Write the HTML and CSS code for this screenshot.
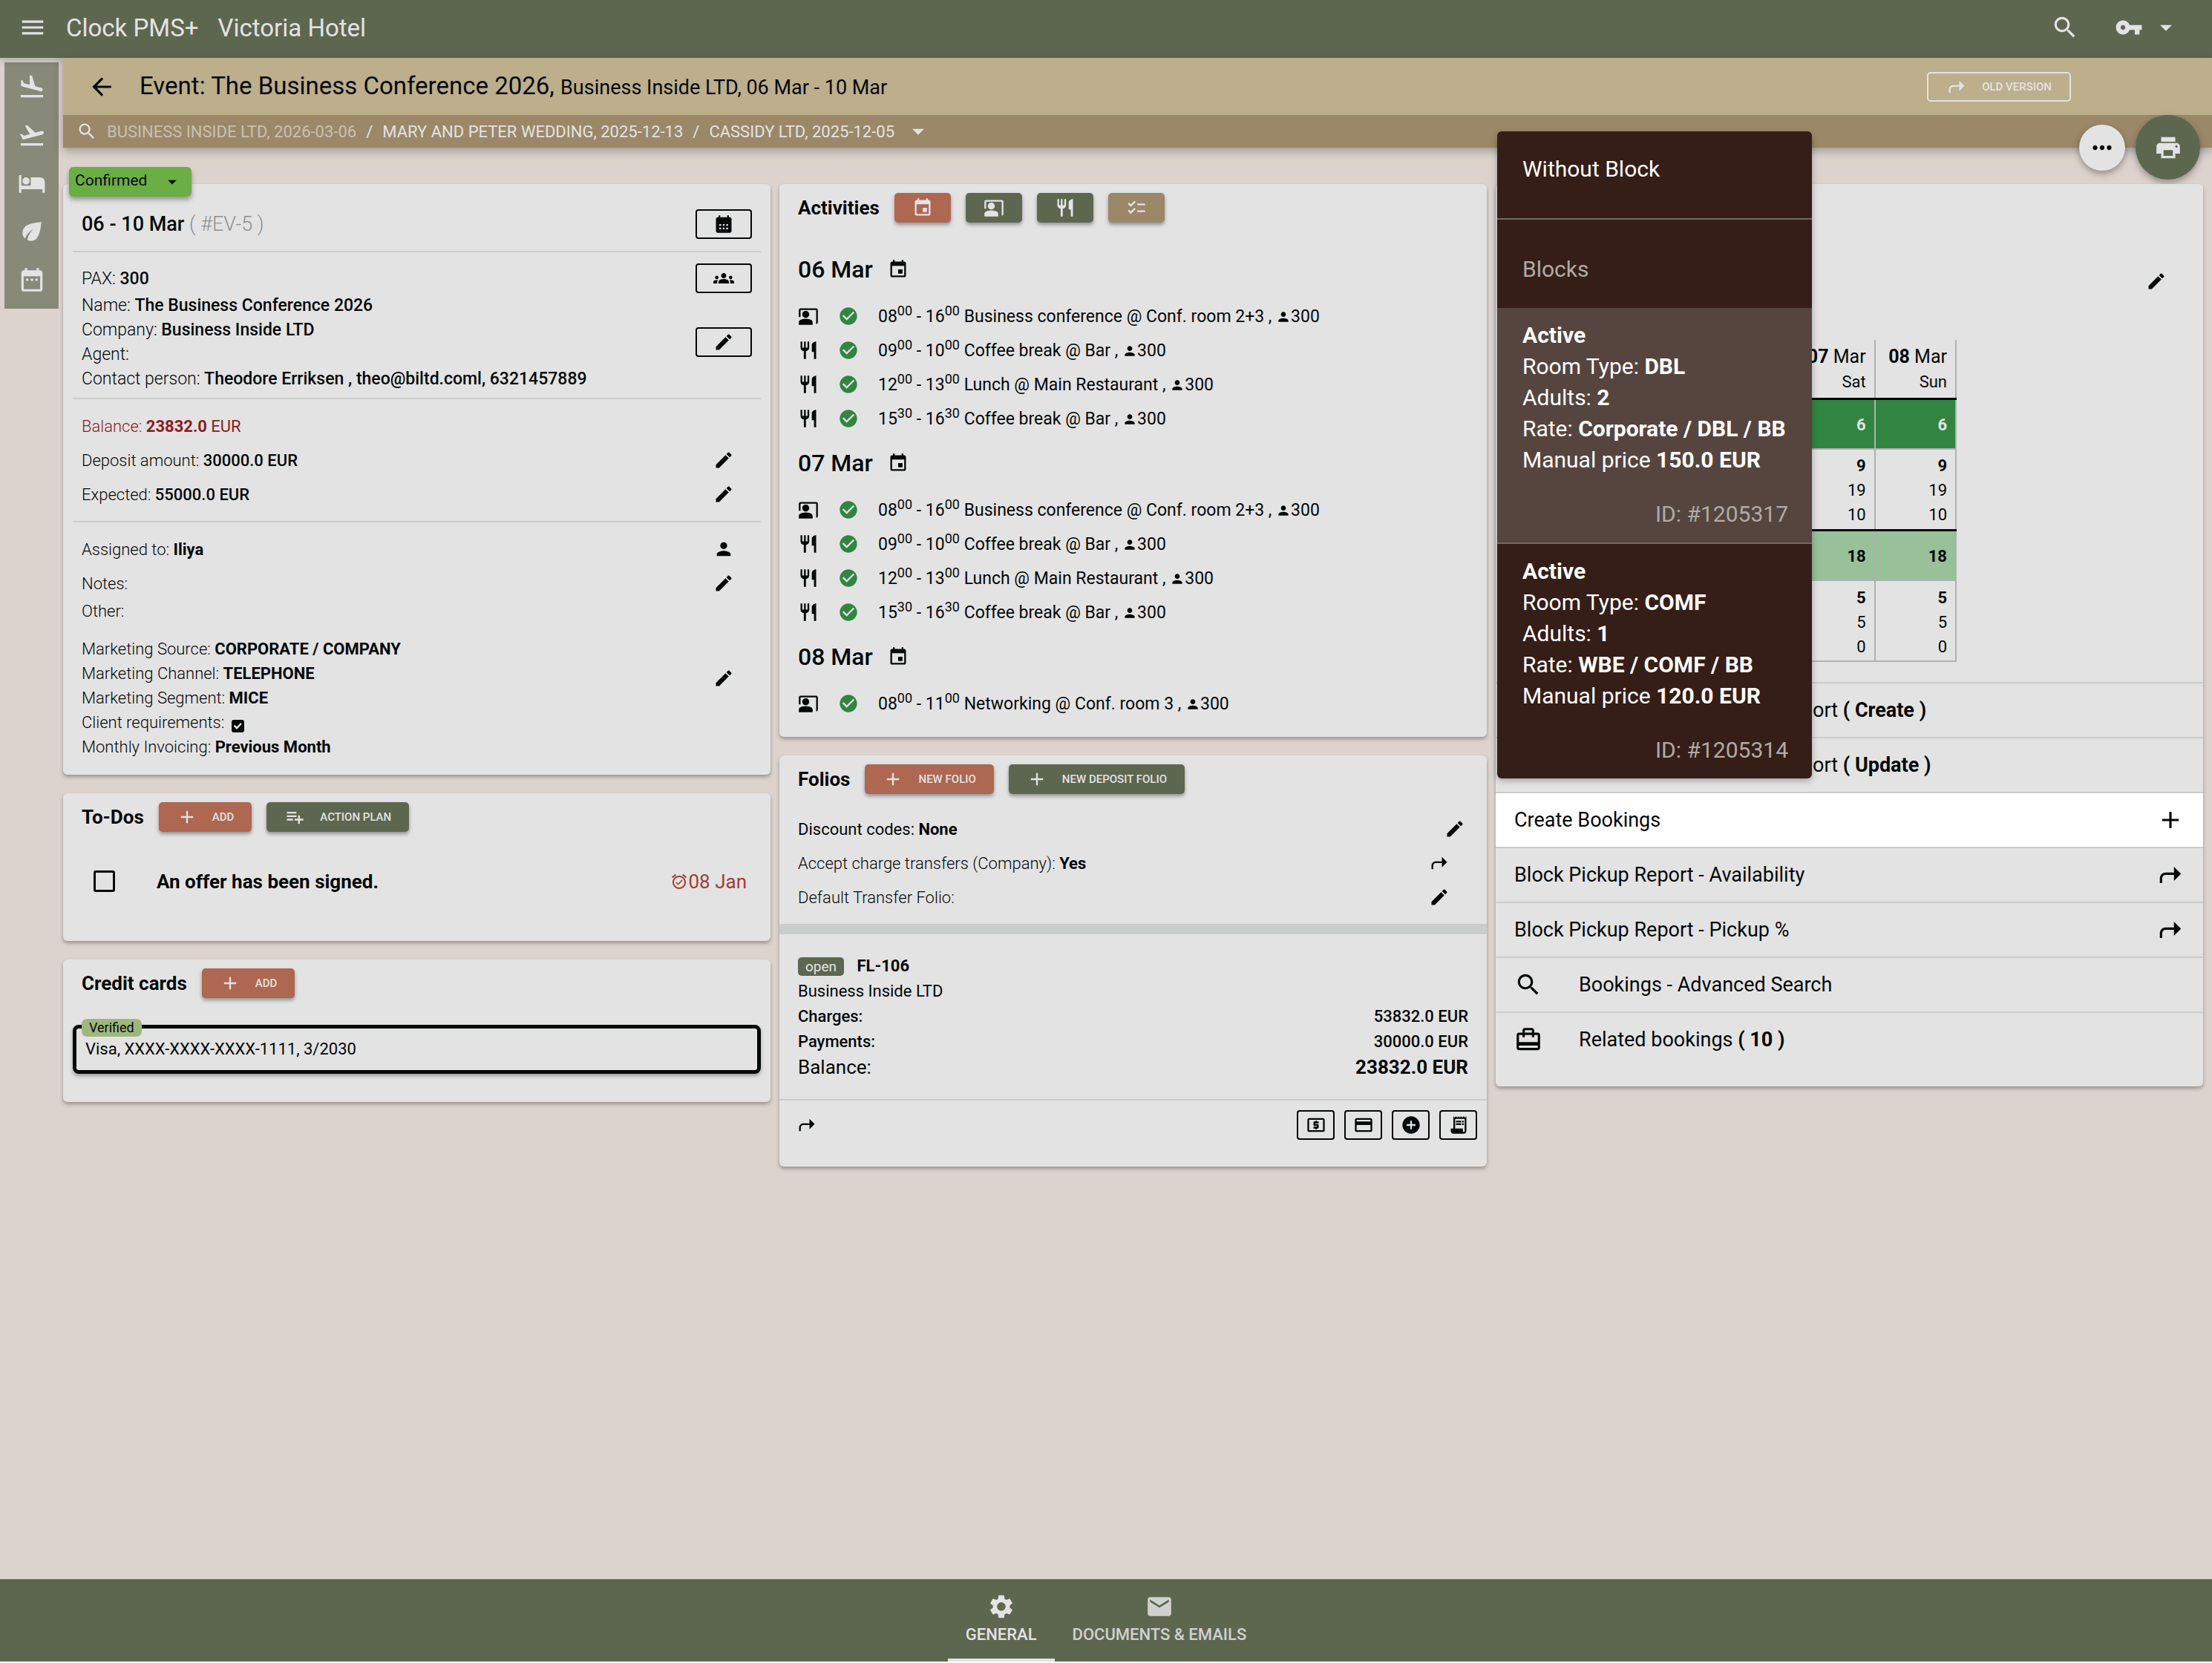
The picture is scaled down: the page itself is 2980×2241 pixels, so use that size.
FILE: index.html
```html
<!DOCTYPE html>
<html lang="en">
<head>
    <meta charset="UTF-8">
    <meta name="viewport" content="width=device-width, initial-scale=1.0">
    <title>Clock PMS+ - Victoria Hotel</title>
    <link rel="stylesheet" href="styles.css">
</head>
<body>
    <!-- Icon sprite -->
    <svg class="sprite" aria-hidden="true">
        <symbol id="menu" viewBox="0 0 24 24"><path d="M3 18h18v-2H3v2zm0-5h18v-2H3v2zm0-7v2h18V6H3z"/></symbol>
        <symbol id="search" viewBox="0 0 24 24"><path d="M15.5 14h-.79l-.28-.27C15.41 12.59 16 11.11 16 9.5 16 5.91 13.09 3 9.5 3S3 5.91 3 9.5 5.91 16 9.5 16c1.61 0 3.09-.59 4.23-1.57l.27.28v.79l5 4.99L20.49 19l-4.99-5zm-6 0C7.01 14 5 11.99 5 9.5S7.01 5 9.5 5 14 7.01 14 9.5 11.99 14 9.5 14z"/></symbol>
        <symbol id="key" viewBox="0 0 24 24"><path d="M12.65 10C11.83 7.67 9.61 6 7 6c-3.31 0-6 2.69-6 6s2.69 6 6 6c2.61 0 4.83-1.67 5.65-4H17v4h4v-4h2v-4H12.65zM7 14c-1.1 0-2-.9-2-2s.9-2 2-2 2 .9 2 2-.9 2-2 2z"/></symbol>
        <symbol id="drop" viewBox="0 0 24 24"><path d="M7 10l5 5 5-5z"/></symbol>
        <symbol id="back" viewBox="0 0 24 24"><path d="M20 11H7.83l5.59-5.59L12 4l-8 8 8 8 1.41-1.41L7.83 13H20v-2z"/></symbol>
        <symbol id="land" viewBox="0 0 24 24"><path d="M2.5 19h19v2h-19zm7.18-5.73l4.35 1.16 5.31 1.42c.8.21 1.62-.26 1.84-1.06.21-.8-.26-1.62-1.06-1.84l-5.31-1.42-2.76-9.02L10.12 2v8.28L5.15 8.95l-.93-2.32-1.45-.39v5.17l1.6.43 5.31 1.43z"/></symbol>
        <symbol id="takeoff" viewBox="0 0 24 24"><path d="M2.5 19h19v2h-19zm19.57-9.36c-.21-.8-1.04-1.28-1.84-1.06L14.92 10l-6.9-6.43-1.93.51 4.14 7.17-4.97 1.33-1.97-1.54-1.45.39 1.82 3.16.77 1.33 1.6-.43 5.31-1.42 4.35-1.16L21 11.49c.81-.23 1.28-1.05 1.07-1.85z"/></symbol>
        <symbol id="hotel" viewBox="0 0 24 24"><path d="M7 13c1.66 0 3-1.34 3-3S8.66 7 7 7s-3 1.34-3 3 1.34 3 3 3zm12-6h-8v7H3V5H1v15h2v-3h18v3h2v-9c0-2.21-1.79-4-4-4z"/></symbol>
        <symbol id="eco" viewBox="0 0 24 24"><path d="M6.05 8.05c-2.73 2.73-2.73 7.15-.02 9.88 1.47-3.4 4.09-6.24 7.36-7.93-2.77 2.34-4.71 5.61-5.39 9.32 2.6 1.23 5.8.78 7.95-1.37C19.43 14.47 20 4 20 4S9.53 4.57 6.05 8.05z"/></symbol>
        <symbol id="range" viewBox="0 0 24 24"><path d="M9 11H7v2h2v-2zm4 0h-2v2h2v-2zm4 0h-2v2h2v-2zm2-7h-1V2h-2v2H8V2H6v2H5c-1.11 0-1.99.9-1.99 2L3 20c0 1.1.89 2 2 2h14c1.1 0 2-.9 2-2V6c0-1.1-.9-2-2-2zm0 16H5V9h14v11z"/></symbol>
        <symbol id="month" viewBox="0 0 24 24"><path d="M19 4h-1V2h-2v2H8V2H6v2H5c-1.11 0-1.99.9-1.99 2L3 20a2 2 0 0 0 2 2h14c1.1 0 2-.9 2-2V6c0-1.1-.9-2-2-2zM9 18H7v-2h2v2zm0-4H7v-2h2v2zm4 4h-2v-2h2v2zm0-4h-2v-2h2v2zm4 4h-2v-2h2v2zm0-4h-2v-2h2v2z"/></symbol>
        <symbol id="groups" viewBox="0 0 24 24"><path d="M12 12.75c1.63 0 3.07.39 4.24.9 1.08.48 1.76 1.56 1.76 2.73V18H6v-1.61c0-1.18.68-2.26 1.76-2.73 1.17-.52 2.61-.91 4.24-.91zM4 13c1.1 0 2-.9 2-2s-.9-2-2-2-2 .9-2 2 .9 2 2 2zm1.13 1.1c-.37-.06-.74-.1-1.13-.1-.99 0-1.93.21-2.78.58C.48 14.9 0 15.62 0 16.43V18h4.5v-1.61c0-.83.23-1.61.63-2.29zM20 13c1.1 0 2-.9 2-2s-.9-2-2-2-2 .9-2 2 .9 2 2 2zm4 3.43c0-.81-.48-1.53-1.22-1.85-.85-.37-1.79-.58-2.78-.58-.39 0-.76.04-1.13.1.4.68.63 1.46.63 2.29V18H24v-1.57zM12 6c1.66 0 3 1.34 3 3s-1.34 3-3 3-3-1.34-3-3 1.34-3 3-3z"/></symbol>
        <symbol id="edit" viewBox="0 0 24 24"><path d="M3 17.25V21h3.75L17.81 9.94l-3.75-3.75L3 17.25zM20.71 7.04c.39-.39.39-1.02 0-1.41l-2.34-2.34c-.39-.39-1.02-.39-1.41 0l-1.83 1.83 3.75 3.75 1.83-1.83z"/></symbol>
        <symbol id="person" viewBox="0 0 24 24"><path d="M12 12c2.21 0 4-1.79 4-4s-1.79-4-4-4-4 1.79-4 4 1.79 4 4 4zm0 2c-2.67 0-8 1.34-8 4v2h16v-2c0-2.66-5.33-4-8-4z"/></symbol>
        <symbol id="event" viewBox="0 0 24 24"><path d="M17 12h-5v5h5v-5zM16 1v2H8V1H6v2H5c-1.11 0-1.99.9-1.99 2L3 19c0 1.1.89 2 2 2h14c1.1 0 2-.9 2-2V5c0-1.1-.9-2-2-2h-1V1h-2zm3 18H5V8h14v11z"/></symbol>
        <symbol id="present" viewBox="0 0 24 24"><path d="M21 3H3c-1.1 0-2 .9-2 2v8h2V5h18v16c1.1 0 2-.9 2-2V5c0-1.1-.9-2-2-2zM13 10c0-2.21-1.79-4-4-4s-4 1.79-4 4 1.79 4 4 4 4-1.79 4-4zM15.39 16.56C13.71 15.7 11.53 15 9 15s-4.71.7-6.39 1.56C1.61 17.07 1 18.1 1 19.22V22h16v-2.78c0-1.12-.61-2.15-1.61-2.66z"/></symbol>
        <symbol id="food" viewBox="0 0 24 24"><path d="M11 9H9V2H7v7H5V2H3v7c0 2.12 1.66 3.84 3.75 3.97V22h2.5v-9.03C11.34 12.84 13 11.12 13 9V2h-2v7zm5-3v8h2.5v8H21V2c-2.76 0-5 2.24-5 4z"/></symbol>
        <symbol id="checklist" viewBox="0 0 24 24"><path d="M22 7h-9v2h9V7zm0 8h-9v2h9v-2zM5.54 11L2 7.46l1.41-1.41 2.12 2.12 4.24-4.24 1.41 1.41L5.54 11zm0 8L2 15.46l1.41-1.41 2.12 2.12 4.24-4.24 1.41 1.41L5.54 19z"/></symbol>
        <symbol id="check" viewBox="0 0 24 24"><path d="M12 2C6.48 2 2 6.48 2 12s4.48 10 10 10 10-4.48 10-10S17.52 2 12 2zm-2 15l-5-5 1.41-1.41L10 14.17l7.59-7.59L19 8l-9 9z"/></symbol>
        <symbol id="shortcut" viewBox="0 0 24 24"><path d="M21 11l-6-6v5H8c-2.76 0-5 2.24-5 5v4h2v-4c0-1.65 1.35-3 3-3h7v5l6-6z"/></symbol>
        <symbol id="add" viewBox="0 0 24 24"><path d="M19 13h-6v6h-2v-6H5v-2h6V5h2v6h6v2z"/></symbol>
        <symbol id="playlist" viewBox="0 0 24 24"><path d="M14 10H3v2h11v-2zm0-4H3v2h11V6zm4 8v-4h-2v4h-4v2h4v4h2v-4h4v-2h-4zM3 16h7v-2H3v2z"/></symbol>
        <symbol id="alarm" viewBox="0 0 24 24"><path d="M22 5.72l-4.6-3.86-1.29 1.53 4.6 3.86L22 5.72zM7.88 3.39L6.6 1.86 2 5.71l1.29 1.53 4.59-3.85zM12 4c-4.97 0-9 4.03-9 9s4.02 9 9 9c4.97 0 9-4.03 9-9s-4.03-9-9-9zm0 16c-3.87 0-7-3.13-7-7s3.13-7 7-7 7 3.13 7 7-3.13 7-7 7zm-1.46-5.47L8.41 12.4l-1.06 1.06 3.18 3.18 6-6-1.06-1.06-4.93 4.95z"/></symbol>
        <symbol id="more" viewBox="0 0 24 24"><path d="M6 10c-1.1 0-2 .9-2 2s.9 2 2 2 2-.9 2-2-.9-2-2-2zm12 0c-1.1 0-2 .9-2 2s.9 2 2 2 2-.9 2-2-.9-2-2-2zm-6 0c-1.1 0-2 .9-2 2s.9 2 2 2 2-.9 2-2-.9-2-2-2z"/></symbol>
        <symbol id="print" viewBox="0 0 24 24"><path d="M19 8H5c-1.66 0-3 1.34-3 3v6h4v4h12v-4h4v-6c0-1.66-1.34-3-3-3zm-3 11H8v-5h8v5zm3-7c-.55 0-1-.45-1-1s.45-1 1-1 1 .45 1 1-.45 1-1 1zm-1-9H6v4h12V3z"/></symbol>
        <symbol id="cash" viewBox="0 0 24 24"><path d="M11 17h2v-1h1c.55 0 1-.45 1-1v-3c0-.55-.45-1-1-1h-3v-1h4V8h-2V7h-2v1h-1c-.55 0-1 .45-1 1v3c0 .55.45 1 1 1h3v1H9v2h2v1zm9-13H4c-1.11 0-1.99.89-1.99 2L2 18c0 1.11.89 2 2 2h16c1.11 0 2-.89 2-2V6c0-1.11-.89-2-2-2zm0 14H4V6h16v12z"/></symbol>
        <symbol id="card" viewBox="0 0 24 24"><path d="M20 4H4c-1.11 0-1.99.89-1.99 2L2 18c0 1.11.89 2 2 2h16c1.11 0 2-.89 2-2V6c0-1.11-.89-2-2-2zm0 14H4v-6h16v6zm0-10H4V6h16v2z"/></symbol>
        <symbol id="add-circle" viewBox="0 0 24 24"><path d="M12 2C6.48 2 2 6.48 2 12s4.48 10 10 10 10-4.48 10-10S17.52 2 12 2zm5 11h-4v4h-2v-4H7v-2h4V7h2v4h4v2z"/></symbol>
        <symbol id="receipt" viewBox="0 0 24 24"><path d="M19.5 3.5L18 2l-1.5 1.5L15 2l-1.5 1.5L12 2l-1.5 1.5L9 2 7.5 3.5 6 2v14H3v3c0 1.66 1.34 3 3 3h12c1.66 0 3-1.34 3-3V2l-1.5 1.5zM19 19c0 .55-.45 1-1 1s-1-.45-1-1v-3H8V5h11v14z"/><path d="M9 7h6v2H9zM16 7h2v2h-2zM9 10h6v2H9zM16 10h2v2h-2z"/></symbol>
        <symbol id="settings" viewBox="0 0 24 24"><path d="M19.14 12.94c.04-.3.06-.61.06-.94 0-.32-.02-.64-.07-.94l2.03-1.58c.18-.14.23-.41.12-.61l-1.92-3.32c-.12-.22-.37-.29-.59-.22l-2.39.96c-.5-.38-1.03-.7-1.62-.94l-.36-2.54c-.04-.24-.24-.41-.48-.41h-3.84c-.24 0-.43.17-.47.41l-.36 2.54c-.59.24-1.13.57-1.62.94l-2.39-.96c-.22-.08-.47 0-.59.22L2.74 8.87c-.12.21-.08.47.12.61l2.03 1.58c-.05.3-.09.63-.09.94s.02.64.07.94l-2.03 1.58c-.18.14-.23.41-.12.61l1.92 3.32c.12.22.37.29.59.22l2.39-.96c.5.38 1.03.7 1.62.94l.36 2.54c.05.24.24.41.48.41h3.84c.24 0 .44-.17.47-.41l.36-2.54c.59-.24 1.13-.56 1.62-.94l2.39.96c.22.08.47 0 .59-.22l1.92-3.32c.12-.22.07-.47-.12-.61l-2.01-1.58zM12 15.6c-1.98 0-3.6-1.62-3.6-3.6s1.62-3.6 3.6-3.6 3.6 1.62 3.6 3.6-1.62 3.6-3.6 3.6z"/></symbol>
        <symbol id="mail" viewBox="0 0 24 24"><path d="M20 4H4c-1.1 0-1.99.9-1.99 2L2 18c0 1.1.9 2 2 2h16c1.1 0 2-.9 2-2V6c0-1.1-.9-2-2-2zm0 4l-8 5-8-5V6l8 5 8-5v2z"/></symbol>
        <symbol id="travel" viewBox="0 0 24 24"><path d="M20 6h-3V4c0-1.11-.89-2-2-2H9c-1.11 0-2 .89-2 2v2H4c-1.11 0-2 .89-2 2v11c0 1.11.89 2 2 2h16c1.11 0 2-.89 2-2V8c0-1.11-.89-2-2-2zM9 4h6v2H9V4zm11 15H4v-2h16v2zm0-5H4V8h3v2h2V8h6v2h2V8h3v6z"/></symbol>
    </svg>

    <!-- Top bar -->
    <header class="topbar">
        <button class="plain" aria-label="Menu"><svg class="icon-lg"><use href="#menu"/></svg></button>
        <span class="app-name">Clock PMS+</span>
        <span class="hotel-name">Victoria Hotel</span>
        <div class="topbar-tools">
            <button class="plain" aria-label="Search"><svg class="icon-lg"><use href="#search"/></svg></button>
            <button class="plain account" aria-label="Account"><svg class="icon-lg"><use href="#key"/></svg><svg class="icon-lg"><use href="#drop"/></svg></button>
        </div>
    </header>

    <div class="layout">
        <nav class="sidebar" aria-label="Shortcuts">
            <a href="#arrivals" aria-label="Arrivals"><svg class="icon-lg"><use href="#land"/></svg></a>
            <a href="#departures" aria-label="Departures"><svg class="icon-lg"><use href="#takeoff"/></svg></a>
            <a href="#in-house" aria-label="In house"><svg class="icon-lg"><use href="#hotel"/></svg></a>
            <a href="#housekeeping" aria-label="Housekeeping"><svg class="icon-lg"><use href="#eco"/></svg></a>
            <a href="#calendar" aria-label="Calendar"><svg class="icon-lg"><use href="#range"/></svg></a>
        </nav>

        <div class="page">
            <div class="page-head">
                <div class="title-bar">
                    <a href="#events" class="back" aria-label="Back"><svg class="icon-lg"><use href="#back"/></svg></a>
                    <h1>Event: The Business Conference 2026, <small>Business Inside LTD, 06 Mar - 10 Mar</small></h1>
                    <button class="btn btn-outline"><svg class="icon"><use href="#shortcut"/></svg>OLD VERSION</button>
                </div>
                <nav class="history" aria-label="Recent events">
                    <svg class="icon"><use href="#search"/></svg>
                    <a href="#ev5" class="current">BUSINESS INSIDE LTD, 2026-03-06</a>
                    <span>/</span>
                    <a href="#ev4">MARY AND PETER WEDDING, 2025-12-13</a>
                    <span>/</span>
                    <a href="#ev3">CASSIDY LTD, 2025-12-05</a>
                    <button class="plain" aria-label="More events"><svg class="icon-lg"><use href="#drop"/></svg></button>
                </nav>
                <div class="fabs">
                    <button class="fab fab-more" aria-label="More"><svg class="icon-lg"><use href="#more"/></svg></button>
                    <button class="fab fab-print" aria-label="Print"><svg class="icon-lg"><use href="#print"/></svg></button>
                </div>
            </div>

            <main class="columns">
                <!-- Left column -->
                <div class="column">
                    <section class="card event">
                        <div class="status">
                            <select aria-label="Status"><option>Confirmed</option></select>
                            <svg class="icon"><use href="#drop"/></svg>
                        </div>
                        <div class="part dates">
                            <div class="row"><p class="period"><b>06 - 10 Mar</b> <span>( #EV-5 )</span></p>
                                <button class="box-btn" aria-label="Change dates"><svg class="icon"><use href="#month"/></svg></button></div>
                        </div>
                        <div class="part people">
                            <div class="row"><p>PAX: <b>300</b></p>
                                <button class="box-btn" aria-label="Guests"><svg class="icon"><use href="#groups"/></svg></button></div>
                            <div class="row">
                                <div class="lines">
                                    <p>Name: <b>The Business Conference 2026</b></p>
                                    <p>Company: <b>Business Inside LTD</b></p>
                                    <p>Agent:</p>
                                    <p>Contact person: <b>Theodore Erriksen , theo@biltd.coml, 6321457889</b></p>
                                </div>
                                <button class="box-btn" aria-label="Edit event"><svg class="icon"><use href="#edit"/></svg></button>
                            </div>
                        </div>
                        <div class="part">
                            <div class="row line balance"><p>Balance: <b>23832.0</b> <span>EUR</span></p></div>
                            <div class="row line"><p>Deposit amount: <b>30000.0 EUR</b></p>
                                <button class="plain action" aria-label="Edit deposit"><svg class="icon"><use href="#edit"/></svg></button></div>
                            <div class="row line"><p>Expected: <b>55000.0 EUR</b></p>
                                <button class="plain action" aria-label="Edit expected"><svg class="icon"><use href="#edit"/></svg></button></div>
                        </div>
                        <div class="part details">
                            <div class="row line"><p>Assigned to: <b>Iliya</b></p>
                                <button class="plain action" aria-label="Assign"><svg class="icon"><use href="#person"/></svg></button></div>
                            <div class="row line"><p>Notes:</p>
                                <button class="plain action" aria-label="Edit notes"><svg class="icon"><use href="#edit"/></svg></button></div>
                            <p class="other">Other:</p>
                            <div class="row marketing">
                                <div class="lines">
                                    <p>Marketing Source: <b>CORPORATE / COMPANY</b></p>
                                    <p>Marketing Channel: <b>TELEPHONE</b></p>
                                    <p>Marketing Segment: <b>MICE</b></p>
                                    <p><label for="requirements">Client requirements:</label> <input type="checkbox" id="requirements" class="tick tick-sm" checked></p>
                                    <p>Monthly Invoicing: <b>Previous Month</b></p>
                                </div>
                                <button class="plain action" aria-label="Edit marketing"><svg class="icon"><use href="#edit"/></svg></button>
                            </div>
                        </div>
                    </section>

                    <section class="card todos">
                        <div class="card-head">
                            <h2>To-Dos</h2>
                            <button class="btn btn-red"><svg class="icon"><use href="#add"/></svg>ADD</button>
                            <button class="btn btn-green"><svg class="icon"><use href="#playlist"/></svg>ACTION PLAN</button>
                        </div>
                        <div class="todo">
                            <input type="checkbox" id="offer" class="tick">
                            <label for="offer">An offer has been signed.</label>
                            <span class="due"><svg class="icon"><use href="#alarm"/></svg>08 Jan</span>
                        </div>
                    </section>

                    <section class="card credit">
                        <div class="card-head">
                            <h2>Credit cards</h2>
                            <button class="btn btn-red"><svg class="icon"><use href="#add"/></svg>ADD</button>
                        </div>
                        <div class="credit-card">
                            <span class="verified">Verified</span>
                            <a href="#card">Visa, XXXX-XXXX-XXXX-1111, 3/2030</a>
                        </div>
                    </section>
                </div>

                <!-- Middle column -->
                <div class="column">
                    <section class="card activities">
                        <div class="card-head">
                            <h2>Activities</h2>
                            <button class="btn btn-square btn-red" aria-label="Add event"><svg class="icon"><use href="#event"/></svg></button>
                            <button class="btn btn-square btn-green" aria-label="Add meeting"><svg class="icon"><use href="#present"/></svg></button>
                            <button class="btn btn-square btn-green" aria-label="Add catering"><svg class="icon"><use href="#food"/></svg></button>
                            <button class="btn btn-square btn-tan" aria-label="Checklist"><svg class="icon"><use href="#checklist"/></svg></button>
                        </div>
                        <h3>06 Mar <svg class="icon"><use href="#event"/></svg></h3>
                        <ul class="agenda">
                            <li><svg class="icon"><use href="#present"/></svg><svg class="icon ok"><use href="#check"/></svg><p>08<sup>00</sup> - 16<sup>00</sup> Business conference @ Conf. room 2+3 , <svg class="icon-sm"><use href="#person"/></svg>300</p></li>
                            <li><svg class="icon"><use href="#food"/></svg><svg class="icon ok"><use href="#check"/></svg><p>09<sup>00</sup> - 10<sup>00</sup> Coffee break @ Bar , <svg class="icon-sm"><use href="#person"/></svg>300</p></li>
                            <li><svg class="icon"><use href="#food"/></svg><svg class="icon ok"><use href="#check"/></svg><p>12<sup>00</sup> - 13<sup>00</sup> Lunch @ Main Restaurant , <svg class="icon-sm"><use href="#person"/></svg>300</p></li>
                            <li><svg class="icon"><use href="#food"/></svg><svg class="icon ok"><use href="#check"/></svg><p>15<sup>30</sup> - 16<sup>30</sup> Coffee break @ Bar , <svg class="icon-sm"><use href="#person"/></svg>300</p></li>
                        </ul>
                        <h3>07 Mar <svg class="icon"><use href="#event"/></svg></h3>
                        <ul class="agenda">
                            <li><svg class="icon"><use href="#present"/></svg><svg class="icon ok"><use href="#check"/></svg><p>08<sup>00</sup> - 16<sup>00</sup> Business conference @ Conf. room 2+3 , <svg class="icon-sm"><use href="#person"/></svg>300</p></li>
                            <li><svg class="icon"><use href="#food"/></svg><svg class="icon ok"><use href="#check"/></svg><p>09<sup>00</sup> - 10<sup>00</sup> Coffee break @ Bar , <svg class="icon-sm"><use href="#person"/></svg>300</p></li>
                            <li><svg class="icon"><use href="#food"/></svg><svg class="icon ok"><use href="#check"/></svg><p>12<sup>00</sup> - 13<sup>00</sup> Lunch @ Main Restaurant , <svg class="icon-sm"><use href="#person"/></svg>300</p></li>
                            <li><svg class="icon"><use href="#food"/></svg><svg class="icon ok"><use href="#check"/></svg><p>15<sup>30</sup> - 16<sup>30</sup> Coffee break @ Bar , <svg class="icon-sm"><use href="#person"/></svg>300</p></li>
                        </ul>
                        <h3>08 Mar <svg class="icon"><use href="#event"/></svg></h3>
                        <ul class="agenda">
                            <li><svg class="icon"><use href="#present"/></svg><svg class="icon ok"><use href="#check"/></svg><p>08<sup>00</sup> - 11<sup>00</sup> Networking @ Conf. room 3 , <svg class="icon-sm"><use href="#person"/></svg>300</p></li>
                        </ul>
                    </section>

                    <section class="card folios">
                        <div class="card-head">
                            <h2>Folios</h2>
                            <button class="btn btn-red"><svg class="icon"><use href="#add"/></svg>NEW FOLIO</button>
                            <button class="btn btn-green"><svg class="icon"><use href="#add"/></svg>NEW DEPOSIT FOLIO</button>
                        </div>
                        <div class="folio-options">
                            <div class="row line discount"><p>Discount codes: <b>None</b></p>
                                <button class="plain" aria-label="Edit discount codes"><svg class="icon"><use href="#edit"/></svg></button></div>
                            <div class="row line"><p>Accept charge transfers (Company): <b>Yes</b></p>
                                <button class="plain" aria-label="Charge transfers"><svg class="icon"><use href="#shortcut"/></svg></button></div>
                            <div class="row line"><p>Default Transfer Folio:</p>
                                <button class="plain" aria-label="Edit transfer folio"><svg class="icon"><use href="#edit"/></svg></button></div>
                        </div>
                        <div class="folio">
                            <p class="folio-id"><span class="badge">open</span> <b>FL-106</b></p>
                            <p>Business Inside LTD</p>
                            <dl>
                                <div><dt>Charges:</dt><dd>53832.0 EUR</dd></div>
                                <div><dt>Payments:</dt><dd>30000.0 EUR</dd></div>
                                <div class="total"><dt>Balance:</dt><dd>23832.0 EUR</dd></div>
                            </dl>
                        </div>
                        <div class="folio-foot">
                            <button class="plain open-folio" aria-label="Open folio"><svg class="icon"><use href="#shortcut"/></svg></button>
                            <button class="box-btn small" aria-label="Cash"><svg class="icon"><use href="#cash"/></svg></button>
                            <button class="box-btn small" aria-label="Card"><svg class="icon"><use href="#card"/></svg></button>
                            <button class="box-btn small" aria-label="Add charge"><svg class="icon"><use href="#add-circle"/></svg></button>
                            <button class="box-btn small" aria-label="Invoice"><svg class="icon"><use href="#receipt"/></svg></button>
                        </div>
                    </section>
                </div>

                <!-- Right column -->
                <div class="column">
                    <section class="card bookings">
                        <div class="blocks-head">
                            <button class="plain" aria-label="Edit blocks"><svg class="icon"><use href="#edit"/></svg></button>
                        </div>
                        <table class="pickup">
                            <thead>
                                <tr><th class="name"></th><th></th><th><b>07</b> Mar<small>Sat</small></th><th><b>08</b> Mar<small>Sun</small></th></tr>
                            </thead>
                            <tbody>
                                <tr class="sum"><td></td><td></td><td>6</td><td>6</td></tr>
                                <tr class="detail"><td></td><td></td><td><b>9</b><br>19<br>10</td><td><b>9</b><br>19<br>10</td></tr>
                                <tr class="sum light"><td></td><td></td><td>18</td><td>18</td></tr>
                                <tr class="detail"><td></td><td></td><td><b>5</b><br>5<br>0</td><td><b>5</b><br>5<br>0</td></tr>
                            </tbody>
                        </table>
                        <ul class="links">
                            <li><a href="#create" class="tucked"><span>ort <b>( Create )</b></span></a></li>
                            <li><a href="#update" class="tucked"><span>ort <b>( Update )</b></span></a></li>
                            <li class="selected"><a href="#bookings"><span>Create Bookings</span><svg class="icon-lg end"><use href="#add"/></svg></a></li>
                            <li><a href="#availability"><span>Block Pickup Report - Availability</span><svg class="icon-lg end"><use href="#shortcut"/></svg></a></li>
                            <li><a href="#pickup"><span>Block Pickup Report - Pickup %</span><svg class="icon-lg end"><use href="#shortcut"/></svg></a></li>
                            <li><a href="#advanced"><span class="slot"><svg class="icon-lg"><use href="#search"/></svg></span><span>Bookings - Advanced Search</span></a></li>
                            <li><a href="#related"><span class="slot"><svg class="icon-lg"><use href="#travel"/></svg></span><span>Related bookings <b>( 10 )</b></span></a></li>
                        </ul>

                        <!-- Block menu -->
                        <div class="block-menu">
                            <button class="without">Without Block</button>
                            <p class="group">Blocks</p>
                            <button class="block hover">
                                <b>Active</b>
                                <span>Room Type: <b>DBL</b></span>
                                <span>Adults: <b>2</b></span>
                                <span>Rate: <b>Corporate / DBL / BB</b></span>
                                <span>Manual price <b>150.0 EUR</b></span>
                                <span class="id">ID: #1205317</span>
                            </button>
                            <button class="block">
                                <b>Active</b>
                                <span>Room Type: <b>COMF</b></span>
                                <span>Adults: <b>1</b></span>
                                <span>Rate: <b>WBE / COMF / BB</b></span>
                                <span>Manual price <b>120.0 EUR</b></span>
                                <span class="id">ID: #1205314</span>
                            </button>
                        </div>
                    </section>
                </div>
            </main>
        </div>
    </div>

    <!-- Bottom tabs -->
    <nav class="tabs" aria-label="Sections">
        <a href="#general" class="active"><svg class="icon-lg"><use href="#settings"/></svg>GENERAL</a>
        <a href="#documents"><svg class="icon-lg"><use href="#mail"/></svg>DOCUMENTS &amp; EMAILS</a>
    </nav>
</body>
</html>
```
FILE: styles.css
```css
/* General Styles */
* {
    box-sizing: border-box;
}

body {
    display: flex;
    flex-direction: column;
    min-height: 100vh;
    margin: 0;
    font-family: Roboto, 'Liberation Sans', sans-serif;
    font-size: 22px;
    background-color: #dcd3cd;
    color: #050808;
}

h1, h2, h3, p, ul, dl, dd {
    margin: 0;
    padding: 0;
}

ul {
    list-style: none;
}

a {
    color: inherit;
    text-decoration: none;
}

b {
    font-weight: 700;
}

button, select {
    font-family: inherit;
    font-size: inherit;
    color: inherit;
    cursor: pointer;
}

svg {
    fill: currentColor;
    flex-shrink: 0;
}

.sprite {
    display: none;
}

.icon {
    width: 28px;
    height: 28px;
}

.icon-sm {
    width: 20px;
    height: 20px;
}

.icon-lg {
    width: 38px;
    height: 38px;
}

.plain {
    display: flex;
    padding: 0;
    border: 0;
    background: none;
}

/* Top Bar */
.topbar {
    display: flex;
    align-items: center;
    height: 78px;
    padding: 0 43px 4px 25px;
    background-color: #5d6750;
    color: #e3e3e3;
    font-size: 33px;
    position: relative;
    box-shadow: 0 4px 10px rgba(0, 0, 0, 0.2);
}

.app-name {
    margin-left: 26px;
}

.hotel-name {
    margin-left: 26px;
}

.topbar-tools {
    display: flex;
    gap: 48px;
    margin-left: auto;
}

.account {
    gap: 12px;
}

/* Layout */
.layout {
    display: flex;
    align-items: flex-start;
    flex: 1;
}

.sidebar {
    width: 73px;
    margin: 6px 6px 0;
    padding-bottom: 7px;
    background-color: #878a79;
    color: #e3e3e3;
}

.sidebar a {
    display: flex;
    align-items: center;
    justify-content: center;
    height: 65px;
}

.page {
    flex: 1;
}

/* Page Head */
.page-head {
    position: relative;
    box-shadow: 0 4px 12px rgba(0, 0, 0, 0.3);
}

.title-bar {
    display: flex;
    align-items: center;
    height: 77px;
    padding: 0 190px 0 33px;
    background-color: #bdae8c;
}

.back {
    display: flex;
}

.title-bar h1 {
    margin-left: 32px;
    padding-bottom: 3px;
    font-size: 33px;
    font-weight: 400;
}

.title-bar small {
    font-size: 27px;
}

.history {
    display: flex;
    align-items: center;
    gap: 13px;
    height: 44px;
    padding-left: 18px;
    background-color: #9b8868;
    color: #e3e3e3;
}

.history .current {
    color: #c9c0b0;
}

.fabs {
    display: flex;
    align-items: center;
    gap: 14px;
    position: absolute;
    right: 16px;
    bottom: -43px;
}

.fab {
    display: flex;
    align-items: center;
    justify-content: center;
    padding: 0;
    border: 0;
    border-radius: 50%;
    box-shadow: 0 4px 10px rgba(0, 0, 0, 0.35);
}

.fab-more {
    width: 62px;
    height: 62px;
    background-color: #e3e3e3;
}

.fab-print {
    width: 87px;
    height: 87px;
    background-color: #5d6750;
    color: #e3e3e3;
}

/* Buttons */
.btn {
    display: flex;
    align-items: center;
    gap: 20px;
    height: 40px;
    padding: 0 24px;
    border: 0;
    border-radius: 5px;
    color: #e3e3e3;
    font-size: 15px;
    font-weight: 500;
    box-shadow: 0 3px 5px rgba(0, 0, 0, 0.35);
}

.btn-red {
    background-color: #ae6750;
}

.btn-green {
    background-color: #5d6750;
}

.btn-tan {
    background-color: #9b8868;
}

.btn-outline {
    margin-left: auto;
    border: 2px solid #e3e3e3;
    background: none;
    box-shadow: none;
}

.btn-square {
    justify-content: center;
    width: 76px;
    padding: 0;
}

.box-btn {
    display: flex;
    align-items: center;
    justify-content: center;
    width: 76px;
    height: 40px;
    padding: 0;
    border: 2px solid #050808;
    border-radius: 4px;
    background: none;
}

.box-btn.small {
    width: 51px;
}

/* Cards */
.columns {
    display: grid;
    grid-template-columns: repeat(3, 1fr);
    gap: 12px;
    align-items: start;
    padding: 49px 12px 40px 0;
}

.column {
    display: flex;
    flex-direction: column;
    gap: 25px;
}

.card {
    position: relative;
    border-radius: 6px;
    background-color: #e3e3e3;
    box-shadow: 0 3px 5px rgba(0, 0, 0, 0.3);
}

.card-head {
    display: flex;
    align-items: center;
    gap: 20px;
    padding: 12px 25px 0;
}

.card-head h2 {
    font-size: 26px;
    font-weight: 700;
    line-height: 36px;
}

.row {
    display: flex;
    align-items: center;
    justify-content: space-between;
}

.line {
    height: 46px;
}

/* Event Card */
.event {
    padding: 18px 13px 21px;
    font-weight: 300;
}

.event b {
    font-weight: 500;
}

.event .details b, .event .balance b {
    font-weight: 700;
}

.status {
    display: flex;
    align-items: center;
    position: absolute;
    top: -23px;
    left: 8px;
}

.status select {
    width: 165px;
    height: 40px;
    padding: 0 8px 4px;
    border: 0;
    border-radius: 6px;
    background-color: #6bae43;
    font-size: 21px;
    appearance: none;
    box-shadow: 0 4px 6px rgba(0, 0, 0, 0.35);
}

.status svg {
    margin-left: -40px;
    pointer-events: none;
}

.part {
    padding: 13px 12px;
    border-bottom: 2px solid #cbcccc;
}

.part:last-child {
    padding-bottom: 0;
    border-bottom: 0;
}

.part.dates {
    padding-top: 0;
    padding-bottom: 0;
}

.dates .row {
    height: 72px;
}

.part.people {
    padding-top: 15px;
    padding-bottom: 9px;
    font-size: 23px;
}

.period {
    font-size: 27px;
}

.period span {
    color: #8f9090;
}

.lines p {
    line-height: 33px;
}

.balance {
    color: #8e1c1c;
}

.balance span {
    font-weight: 400;
}

.action {
    width: 76px;
    justify-content: center;
}

.other {
    line-height: 30px;
    padding-bottom: 19px;
}

.marketing {
    align-items: flex-start;
}

.marketing .action {
    padding-top: 42px;
}

.tick {
    display: inline-flex;
    width: 29px;
    height: 29px;
    margin: 0;
    border: 3px solid #050808;
    border-radius: 3px;
    appearance: none;
}

.tick-sm {
    width: 17px;
    height: 17px;
    margin-left: 4px;
    vertical-align: -3px;
}

.tick:checked {
    background-color: #050808;
}

.tick:checked::after {
    content: "";
    flex: 1;
    background-color: #e3e3e3;
    clip-path: polygon(0 50%, 15% 35%, 38% 60%, 86% 10%, 100% 25%, 38% 90%);
}

/* To-Dos */
.todos {
    padding-bottom: 30px;
}

.todo {
    display: flex;
    align-items: center;
    height: 101px;
    margin-top: 16px;
    padding: 0 32px 0 41px;
    font-size: 26px;
}

.todo label {
    margin-left: 56px;
    font-weight: 700;
}

.due {
    display: flex;
    align-items: center;
    margin-left: auto;
    color: #a13e33;
}

.due .icon {
    width: 24px;
    height: 24px;
}

/* Credit Cards */
.credit {
    padding-bottom: 38px;
}

.credit-card {
    position: relative;
    margin: 36px 13px 0;
    padding: 0 12px;
    border: 5px solid #050808;
    border-radius: 8px;
    line-height: 56px;
    box-shadow: 0 3px 5px rgba(0, 0, 0, 0.3);
}

.verified {
    position: absolute;
    top: -13px;
    left: 7px;
    padding: 0 10px;
    border-radius: 7px;
    background-color: #9fb77f;
    font-size: 18px;
    line-height: 24px;
}

/* Activities */
.activities {
    padding-bottom: 22px;
}

.activities .card-head {
    padding-bottom: 26px;
}

.activities h3 {
    display: flex;
    align-items: center;
    gap: 20px;
    height: 77px;
    padding: 0 25px 4px;
    font-size: 32px;
    font-weight: 500;
}

.agenda li {
    display: flex;
    align-items: center;
    height: 46px;
    padding-left: 25px;
    font-size: 23px;
}

.agenda .ok {
    margin: 0 26px;
    color: #328541;
}

.agenda .icon-sm {
    vertical-align: -3px;
}

sup {
    font-size: 18px;
    line-height: 0;
}

/* Folios */
.folio-options {
    padding: 24px 50px 13px 25px;
    border-bottom: 14px solid #cbcccc;
    font-weight: 300;
}

.folio-options .discount {
    margin-right: -21px;
    font-weight: 400;
}

.folio {
    padding: 26px 25px 26px;
}

.folio p, .folio dl div {
    line-height: 34px;
}

.folio dl div {
    display: flex;
    justify-content: space-between;
}

.folio dt, .folio dd {
    font-weight: 500;
}

.folio .total {
    font-size: 26px;
}

.folio .total dt {
    font-weight: 400;
}

.folio .total dd {
    font-weight: 700;
}

.badge {
    display: inline-block;
    margin-right: 12px;
    padding: 0 10px;
    border-radius: 5px;
    background-color: #5d6750;
    color: #e3e3e3;
    font-size: 19px;
    line-height: 25px;
}

.folio-foot {
    display: flex;
    align-items: center;
    gap: 13px;
    padding: 13px 13px 36px 23px;
    border-top: 2px solid #cbcccc;
}

.open-folio {
    margin-right: auto;
}

/* Bookings */
.blocks-head {
    display: flex;
    justify-content: flex-end;
    padding: 117px 49px 65px;
}

.pickup {
    width: 596px;
    margin-left: 25px;
    border-collapse: collapse;
    table-layout: fixed;
}

.pickup .name {
    width: 266px;
}

.pickup th, .pickup td {
    padding: 3px 11px 0;
    border: 2px solid #b0b1b1;
    text-align: right;
}

.pickup th {
    height: 79px;
    padding-top: 0;
    border-top: 0;
    border-bottom: 3px solid #050808;
    font-size: 25px;
    font-weight: 400;
    line-height: 35px;
}

.pickup small {
    display: block;
    font-size: 22px;
    line-height: 33px;
}

.pickup .sum td {
    height: 68px;
    background-color: #328541;
    color: #e3e3e3;
    font-weight: 700;
}

.pickup .sum.light td {
    border-top: 3px solid #050808;
    background-color: #98c19a;
    color: #050808;
}

.pickup .detail td {
    height: 109px;
    line-height: 33px;
}

.links {
    margin-top: 27px;
    padding-bottom: 27px;
    font-size: 27px;
}

.links li {
    border-top: 2px solid #cbcccc;
}

.links a {
    display: flex;
    align-items: center;
    height: 72px;
    padding: 0 25px;
}

.links .tucked {
    padding-left: 427px;
}

.links .selected {
    background-color: #fff;
}

.links .end {
    margin-left: auto;
}

.slot {
    display: flex;
    width: 87px;
}

/* Block Menu */
.block-menu {
    position: absolute;
    top: -71px;
    left: 2px;
    width: 424px;
    border-radius: 6px;
    background-color: #351e17;
    color: #fff;
    font-size: 30px;
    overflow: hidden;
    box-shadow: 0 3px 8px rgba(0, 0, 0, 0.3);
}

.block-menu button {
    width: 100%;
    border: 0;
    background: none;
    text-align: left;
}

.block-menu .without {
    height: 119px;
    padding: 0 34px 16px;
    border-bottom: 2px solid #746963;
}

.group {
    height: 119px;
    padding: 46px 34px 0;
    color: #b1aaa6;
    line-height: 42px;
}

.block-menu .block {
    display: flex;
    flex-direction: column;
    padding: 16px 32px 17px 34px;
    line-height: 42px;
}

.block-menu .hover {
    border-bottom: 2px solid #746963;
    background-color: #56453e;
}

.block .id {
    margin-top: 31px;
    text-align: right;
    color: #b1aaa6;
}

/* Bottom Tabs */
.tabs {
    display: flex;
    justify-content: center;
    border-bottom: 2px solid #fff;
    background-color: #5d6750;
    color: #d0d1ce;
    font-weight: 500;
}

.tabs a {
    display: flex;
    flex-direction: column;
    align-items: center;
    gap: 6px;
    height: 111px;
    padding: 18px 24px 0;
    border-bottom: 4px solid transparent;
}

.tabs .active {
    border-bottom-color: #e3e3e3;
    color: #e3e3e3;
}
```
